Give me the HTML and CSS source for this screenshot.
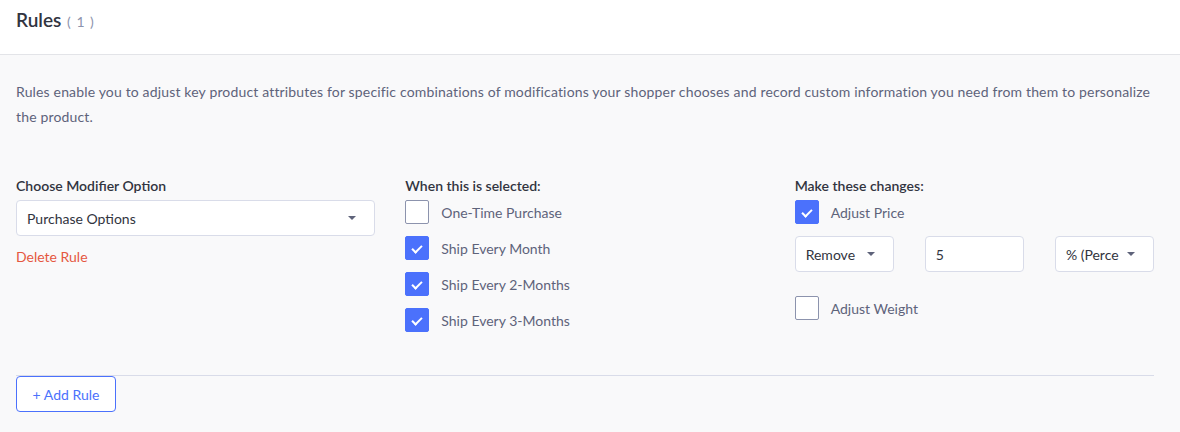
FILE: index.html
```html
<!DOCTYPE html>
<html lang="en">
<head>
  <meta charset="UTF-8" />
  <title>Rules</title>
  <link rel="stylesheet" href="styles.css">
</head>
<body>

<div class="panel-header">
  <h2>Rules <span class="count">( 1 )</span></h2>
</div>

<div class="panel-body">
  <p class="intro">Rules enable you to adjust key product attributes for specific combinations of modifications your shopper chooses and record custom information you need from them to personalize the product.</p>

  <div class="rule">
    <div class="col">
      <div class="col-label">Choose Modifier Option</div>
      <div class="select wide">
        <span>Purchase Options</span>
        <span class="caret"></span>
      </div>
      <a class="delete-link" href="#">Delete Rule</a>
    </div>

    <div class="col">
      <div class="col-label">When this is selected:</div>
      <label class="check"><span class="box"></span>One-Time Purchase</label>
      <label class="check"><span class="box on"></span>Ship Every Month</label>
      <label class="check"><span class="box on"></span>Ship Every 2-Months</label>
      <label class="check"><span class="box on"></span>Ship Every 3-Months</label>
    </div>

    <div class="col">
      <div class="col-label">Make these changes:</div>
      <label class="check"><span class="box on"></span>Adjust Price</label>
      <div class="adjust-row">
        <div class="select"><span>Remove</span><span class="caret"></span></div>
        <div class="text-input">5</div>
        <div class="select"><span>% (Perce</span><span class="caret"></span></div>
      </div>
      <label class="check"><span class="box"></span>Adjust Weight</label>
    </div>
  </div>

  <button class="add-btn">+ Add Rule</button>
</div>

</body>
</html>
```

FILE: styles.css
```css
body {
  margin: 0;
  font-family: Lato, "Liberation Sans", sans-serif;
  font-size: 14px;
  color: #313440;
  background: #f9f9fa;
}

.panel-header {
  background: #fff;
  height: 54px;
  border-bottom: 1px solid #e3e4e8;
  padding: 0 16px;
}

.panel-header h2 {
  margin: 0;
  padding-top: 8px;
  font-size: 19px;
  font-weight: 600;
  color: #313440;
}

.count {
  font-size: 14px;
  font-weight: 400;
  color: #8c93ad;
  letter-spacing: 1px;
  margin-left: 1px;
}

.panel-body {
  padding: 0 26px 0 16px;
}

.intro {
  margin: 24px 0 0;
  line-height: 25px;
  letter-spacing: 0.16px;
  color: #5e637a;
}

.rule {
  display: grid;
  grid-template-columns: repeat(3, 1fr);
  column-gap: 30px;
  margin-top: 38px;
  padding-bottom: 31px;
  border-bottom: 1px solid #d9dce9;
}

.col-label {
  font-weight: 600;
  color: #313440;
  margin-top: 10px;
  margin-bottom: 6px;
}

.select, .text-input {
  height: 36px;
  box-sizing: border-box;
  background: #fff;
  border: 1px solid #d9dce9;
  border-radius: 4px;
  display: flex;
  align-items: center;
  justify-content: space-between;
  padding: 0 10px;
  color: #313440;
}

.wide {
  margin-top: 4px;
}

.caret {
  width: 0;
  height: 0;
  border-left: 4px solid transparent;
  border-right: 4px solid transparent;
  border-top: 4px solid #5e637a;
  margin-left: 8px;
  margin-right: 8px;
}

.delete-link {
  display: inline-block;
  margin-top: 12px;
  color: #e5573f;
  text-decoration: none;
}

.check {
  display: flex;
  align-items: center;
  height: 24px;
  margin-bottom: 12px;
  color: #5e637a;
}

.box {
  width: 24px;
  height: 24px;
  box-sizing: border-box;
  border: 1px solid #8c93ad;
  border-radius: 2px;
  background: #fff;
  margin-right: 12px;
  position: relative;
}

.box.on {
  background: #4b71fc;
  border-color: #4b71fc;
}

.box.on::after {
  content: "";
  position: absolute;
  left: 8px;
  top: 6px;
  width: 4px;
  height: 8px;
  border-right: 2px solid #fff;
  border-bottom: 2px solid #fff;
  transform: rotate(45deg);
}

.adjust-row {
  display: grid;
  grid-template-columns: repeat(3, 1fr);
  column-gap: 31px;
  margin-bottom: 24px;
}

.add-btn {
  display: block;
  height: 36px;
  width: 100px;
  background: #fff;
  border: 1px solid #4b71fc;
  border-radius: 4px;
  color: #4b71fc;
  font-family: inherit;
  font-size: 14px;
  cursor: pointer;
}
```
